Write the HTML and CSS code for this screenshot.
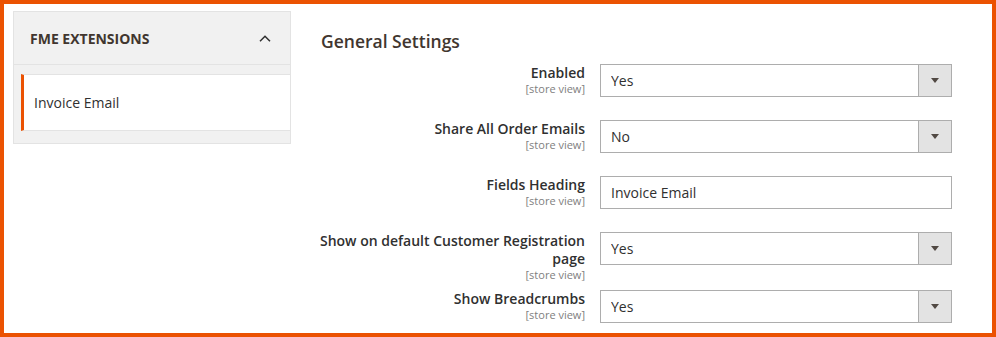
FILE: index.html
```html
<!DOCTYPE html>
<html lang="en">

<head>
    <meta charset="UTF-8">
    <meta name="viewport" content="width=device-width, initial-scale=1.0">
    <title>Configuration - Invoice Email</title>
    <link rel="stylesheet" href="styles.css">
</head>

<body>
    <div class="frame">

        <aside class="tabs">
            <div class="tabs-title">
                <span>FME Extensions</span>
                <svg class="chevron" width="12" height="7" viewBox="0 0 12 7">
                    <path d="M1 6.2 L6 1.2 L11 6.2" fill="none" stroke="#303030" stroke-width="1.5"/>
                </svg>
            </div>
            <ul class="tabs-items">
                <li class="active"><a href="#">Invoice Email</a></li>
            </ul>
        </aside>

        <main class="settings">
            <h2>General Settings</h2>

            <div class="rows">
                <div class="row">
                    <div class="label">
                        <label>Enabled</label>
                        <span class="scope">[store view]</span>
                    </div>
                    <div class="control select">
                        <select>
                            <option selected>Yes</option>
                            <option>No</option>
                        </select>
                        <span class="arrow"></span>
                    </div>
                </div>

                <div class="row">
                    <div class="label">
                        <label>Share All Order Emails</label>
                        <span class="scope">[store view]</span>
                    </div>
                    <div class="control select">
                        <select>
                            <option>Yes</option>
                            <option selected>No</option>
                        </select>
                        <span class="arrow"></span>
                    </div>
                </div>

                <div class="row">
                    <div class="label">
                        <label>Fields Heading</label>
                        <span class="scope">[store view]</span>
                    </div>
                    <div class="control">
                        <input type="text" value="Invoice Email">
                    </div>
                </div>

                <div class="row row-tall">
                    <div class="label">
                        <label>Show on default Customer Registration page</label>
                        <span class="scope">[store view]</span>
                    </div>
                    <div class="control select">
                        <select>
                            <option selected>Yes</option>
                            <option>No</option>
                        </select>
                        <span class="arrow"></span>
                    </div>
                </div>

                <div class="row">
                    <div class="label">
                        <label>Show Breadcrumbs</label>
                        <span class="scope">[store view]</span>
                    </div>
                    <div class="control select">
                        <select>
                            <option selected>Yes</option>
                            <option>No</option>
                        </select>
                        <span class="arrow"></span>
                    </div>
                </div>
            </div>
        </main>

    </div>
</body>

</html>
```

FILE: styles.css
```css
* {
    margin: 0;
    padding: 0;
    box-sizing: border-box;
    font-family: "Open Sans", sans-serif;
}

body {
    background: #fff;
    color: #303030;
}

.frame {
    display: flex;
    align-items: flex-start;
    height: 337px;
    border: 4px solid #eb5202;
    padding: 7px 0 0 9px;
    overflow: hidden;
}

/* left tabs */

.tabs {
    width: 278px;
    flex-shrink: 0;
    background: #f1f1f1;
    border: 1px solid #e3e3e3;
}

.tabs-title {
    display: flex;
    align-items: center;
    justify-content: space-between;
    height: 53px;
    padding: 0 19px 0 16px;
    border-bottom: 1px solid #e3e3e3;
    font-size: 14px;
    font-weight: 700;
    text-transform: uppercase;
    color: #41362f;
}

.tabs-items {
    list-style: none;
    padding: 9px 0 12px 7px;
}

.tabs-items li {
    display: flex;
    align-items: center;
    height: 57px;
    padding-left: 10px;
    background: #fff;
    border-top: 1px solid #e3e3e3;
    border-bottom: 1px solid #e3e3e3;
}

.tabs-items li.active {
    border-left: 3px solid #eb5202;
}

.tabs-items a {
    font-size: 14px;
    color: #303030;
    text-decoration: none;
}

/* settings */

.settings {
    padding: 19px 0 0 24px;
}

.settings h2 {
    padding-left: 6px;
    font-size: 17.5px;
    font-weight: 600;
    line-height: 23px;
    color: #41362f;
    margin-bottom: 11px;
}

.rows {
    display: flex;
    flex-direction: column;
    gap: 23px;
}

.row {
    display: flex;
    height: 33px;
    gap: 15px;
}

.row-tall {
    height: 35px;
}

.label {
    width: 270px;
    text-align: right;
}

.label label {
    display: block;
    font-size: 14px;
    font-weight: 600;
    line-height: 18px;
    color: #303030;
}

.scope {
    display: block;
    font-size: 11px;
    line-height: 13px;
    color: #808080;
}

.control {
    display: flex;
    width: 352px;
    height: 33px;
    border: 1px solid #adadad;
    background: #fff;
}

.control input,
.control select {
    flex: 1;
    min-width: 0;
    border: 0;
    outline: 0;
    padding: 0 10px;
    font-size: 14px;
    color: #303030;
    background: #fff;
    appearance: none;
}

.arrow {
    display: flex;
    align-items: center;
    justify-content: center;
    width: 33px;
    background: #e3e3e3;
    border-left: 1px solid #adadad;
}

.arrow::after {
    content: "";
    border-top: 5px solid #514943;
    border-left: 4px solid transparent;
    border-right: 4px solid transparent;
}
```
